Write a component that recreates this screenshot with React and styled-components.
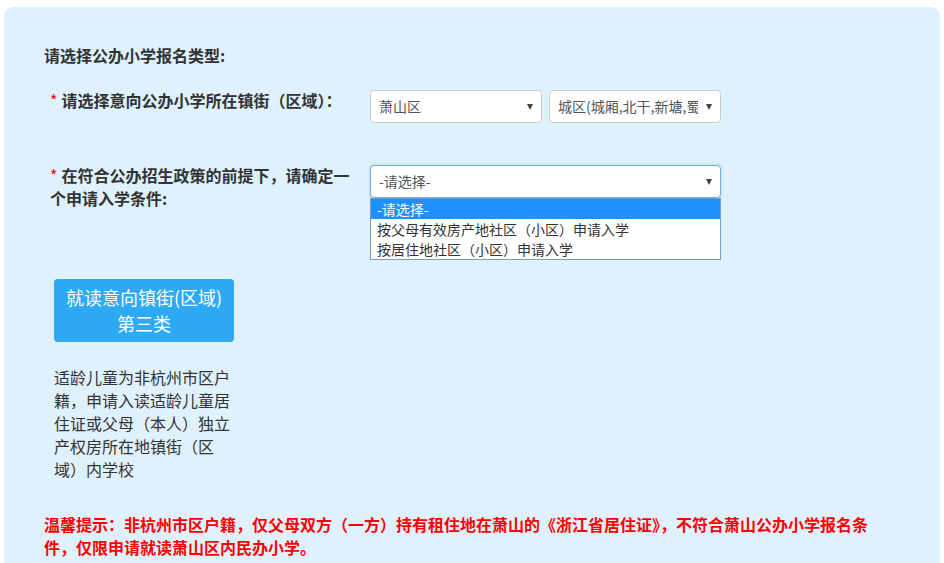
import React from "react";
import styled, { createGlobalStyle } from "styled-components";

const GlobalStyle = createGlobalStyle`
  * { box-sizing: border-box; }
  html, body { margin: 0; padding: 0; background: #fff; }
  body {
    font-family: "Noto Sans CJK SC", "Liberation Sans", sans-serif;
    color: #333;
  }
`;

const Panel = styled.div`
  margin: 7px 4px 0 4px;
  min-height: 600px;
  background: #dff1fc;
  border-radius: 9px;
  padding: 37px 40px 0 40px;
`;

const Title = styled.div`
  font-size: 16px;
  font-weight: bold;
  line-height: 23px;
`;

const Row = styled.div`
  display: flex;
  align-items: flex-start;
  padding-left: 6px;
  margin-top: ${(p) => p.$top}px;
`;

const Label = styled.div`
  width: 320px;
  padding-right: 12px;
  font-size: 16px;
  font-weight: bold;
  line-height: 23px;
  flex-shrink: 0;
  margin-top: ${(p) => p.$top || 0}px;
`;

const Star = styled.span`
  color: #f00;
  margin-right: 4px;
  font-weight: normal;
`;

const Controls = styled.div`
  display: flex;
  gap: 7px;
  margin-top: ${(p) => p.$top || 0}px;
`;

const SelectWrap = styled.div`
  position: relative;
`;

const Select = styled.div`
  position: relative;
  width: ${(p) => p.$w}px;
  height: 33px;
  background: #fff;
  border: 1px solid ${(p) => (p.$focus ? "#79acd9" : "#ccc")};
  border-radius: 4px;
  box-shadow: ${(p) => (p.$focus ? "0 0 3px rgba(102,175,233,0.6)" : "none")};
  padding: 0 22px 0 8px;
  font-size: 14px;
  color: #555;
  line-height: 31px;
`;

const SelectText = styled.span`
  display: block;
  white-space: nowrap;
  overflow: hidden;
`;

const Arrow = styled.span`
  position: absolute;
  right: 8px;
  top: 13px;
  width: 0;
  height: 0;
  border-left: 3.5px solid transparent;
  border-right: 3.5px solid transparent;
  border-top: 6px solid #444;
`;

const Menu = styled.ul`
  position: absolute;
  left: 0;
  top: 33px;
  width: 100%;
  margin: 0;
  padding: 0;
  list-style: none;
  background: #fff;
  border: 1px solid #7a9cc4;
  z-index: 5;
`;

const Option = styled.li`
  height: 20px;
  line-height: 20px;
  padding-left: 6px;
  font-size: 14px;
  color: ${(p) => (p.$active ? "#fff" : "#333")};
  background: ${(p) => (p.$active ? "#1e90ff" : "#fff")};
  white-space: nowrap;
`;

const Category = styled.div`
  margin-top: 69px;
  padding-left: 10px;
  width: 190px;
`;

const TypeButton = styled.div`
  width: 180px;
  padding: 5px 0 6px;
  background: #2eaaf5;
  border-radius: 4px;
  color: #fff;
  font-size: 18px;
  line-height: 26px;
  text-align: center;
`;

const Desc = styled.p`
  margin: 24px 0 0;
  width: 182px;
  font-size: 16px;
  line-height: 23px;
  color: #333;
`;

const Warning = styled.p`
  margin: 32px 0 0;
  width: 845px;
  font-size: 16px;
  font-weight: bold;
  line-height: 23px;
  color: #f00;
`;

export default function App() {
  return (
    <>
      <GlobalStyle />
      <Panel>
        <Title>请选择公办小学报名类型:</Title>
        <Row $top={23}>
          <Label $top={-1}>
            <Star>*</Star>请选择意向公办小学所在镇街（区域）：
          </Label>
          <Controls>
            <Select $w={172}>
              <SelectText>萧山区</SelectText>
              <Arrow />
            </Select>
            <Select $w={172}>
              <SelectText>城区(城厢,北干,新塘,蜀山,闻堰)</SelectText>
              <Arrow />
            </Select>
          </Controls>
        </Row>
        <Row $top={41}>
          <Label>
            <Star>*</Star>在符合公办招生政策的前提下，请确定一个申请入学条件:
          </Label>
          <Controls $top={1}>
            <SelectWrap>
              <Select $w={351} $focus>
                <SelectText>-请选择-</SelectText>
                <Arrow />
              </Select>
              <Menu>
                <Option $active>-请选择-</Option>
                <Option>按父母有效房产地社区（小区）申请入学</Option>
                <Option>按居住地社区（小区）申请入学</Option>
              </Menu>
            </SelectWrap>
          </Controls>
        </Row>
        <Category>
          <TypeButton>
            就读意向镇街(区域)
            <br />
            第三类
          </TypeButton>
          <Desc>
            适龄儿童为非杭州市区户籍，申请入读适龄儿童居住证或父母（本人）独立产权房所在地镇街（区域）内学校
          </Desc>
        </Category>
        <Warning>
          温馨提示：非杭州市区户籍，仅父母双方（一方）持有租住地在萧山的《浙江省居住证》，不符合萧山公办小学报名条件，仅限申请就读萧山区内民办小学。
        </Warning>
      </Panel>
    </>
  );
}
